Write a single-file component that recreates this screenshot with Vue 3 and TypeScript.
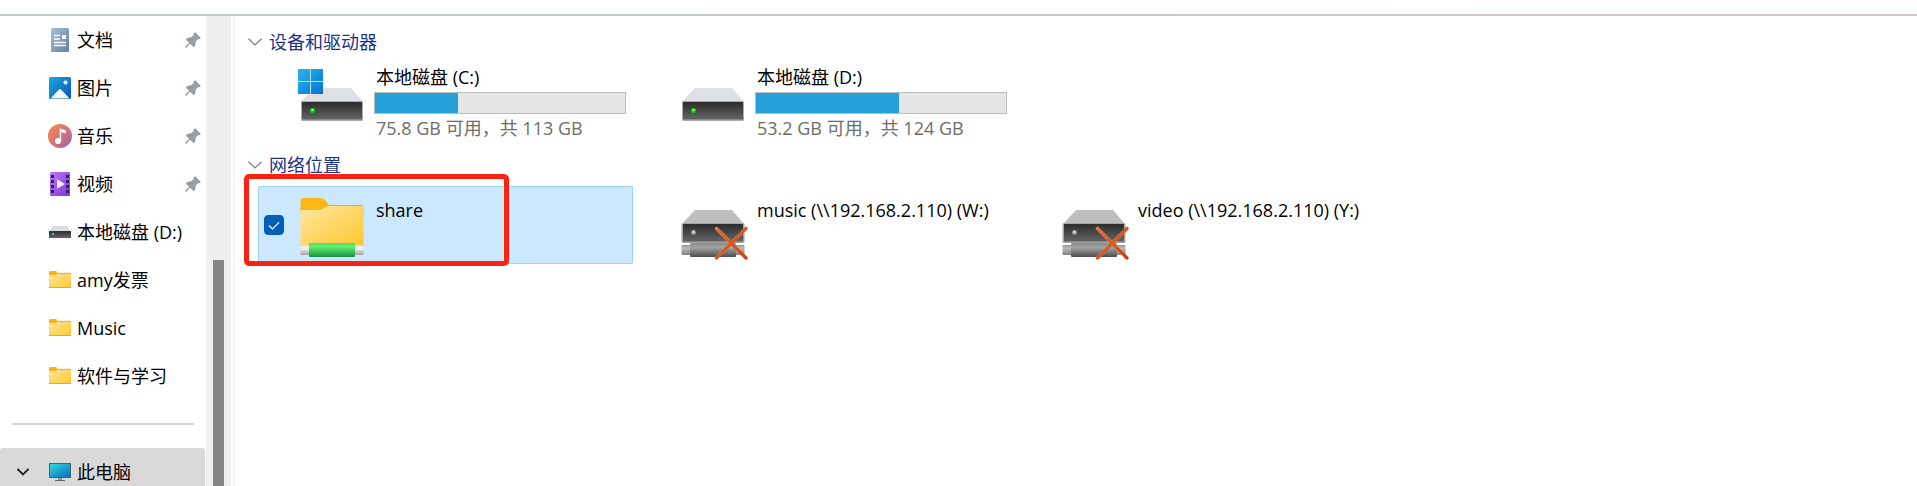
<script setup lang="ts">
import { ref } from 'vue'

type NavIcon = 'document' | 'picture' | 'music' | 'video' | 'drive' | 'folder'

interface NavItem {
  label: string
  icon: NavIcon
  pinned: boolean
}

interface Drive {
  name: string
  info: string
  used: number
  system: boolean
}

const navItems: NavItem[] = [
  { label: '文档', icon: 'document', pinned: true },
  { label: '图片', icon: 'picture', pinned: true },
  { label: '音乐', icon: 'music', pinned: true },
  { label: '视频', icon: 'video', pinned: true },
  { label: '本地磁盘 (D:)', icon: 'drive', pinned: false },
  { label: 'amy发票', icon: 'folder', pinned: false },
  { label: 'Music', icon: 'folder', pinned: false },
  { label: '软件与学习', icon: 'folder', pinned: false },
]

const drives: Drive[] = [
  { name: '本地磁盘 (C:)', info: '75.8 GB 可用，共 113 GB', used: 33, system: true },
  { name: '本地磁盘 (D:)', info: '53.2 GB 可用，共 124 GB', used: 57, system: false },
]

const offlineDrives: string[] = ['music (\\\\192.168.2.110) (W:)', 'video (\\\\192.168.2.110) (Y:)']

const shareSelected = ref(true)
</script>

<template>
  <div class="explorer">
    <svg class="defs" width="0" height="0" aria-hidden="true">
      <defs>
        <linearGradient id="g-doc" x1="0" y1="0" x2="1" y2="1"><stop offset="0" stop-color="#a9bfd6" /><stop offset="1" stop-color="#62809f" /></linearGradient>
        <linearGradient id="g-pic" x1="0" y1="0" x2="1" y2="1"><stop offset="0" stop-color="#1fa5e8" /><stop offset="1" stop-color="#0759ae" /></linearGradient>
        <linearGradient id="g-music" x1="0" y1="0" x2="1" y2="1"><stop offset="0.1" stop-color="#f08a4f" /><stop offset="0.55" stop-color="#d3727c" /><stop offset="1" stop-color="#8f62bd" /></linearGradient>
        <linearGradient id="g-video" x1="0" y1="0" x2="1" y2="1"><stop offset="0" stop-color="#b97cf5" /><stop offset="1" stop-color="#7a35dc" /></linearGradient>
        <linearGradient id="g-folder" x1="0" y1="0" x2="1" y2="1"><stop offset="0" stop-color="#ffe8a2" /><stop offset="1" stop-color="#ffc62f" /></linearGradient>
        <linearGradient id="g-body" x1="0" y1="0" x2="0" y2="1"><stop offset="0" stop-color="#2c2c2c" /><stop offset="1" stop-color="#646464" /></linearGradient>
        <linearGradient id="g-win" x1="0" y1="0" x2="1" y2="1"><stop offset="0" stop-color="#2fb4ee" /><stop offset="1" stop-color="#0074cf" /></linearGradient>
        <linearGradient id="g-green" x1="0" y1="0" x2="0" y2="1"><stop offset="0" stop-color="#55d765" /><stop offset="0.25" stop-color="#62f070" /><stop offset="1" stop-color="#198f45" /></linearGradient>
        <linearGradient id="g-cap" x1="0" y1="0" x2="0" y2="1"><stop offset="0" stop-color="#d8d8d8" /><stop offset="0.3" stop-color="#f7f7f7" /><stop offset="1" stop-color="#a0a0a0" /></linearGradient>
        <linearGradient id="g-tube" x1="0" y1="0" x2="0" y2="1"><stop offset="0" stop-color="#8a8a8a" /><stop offset="0.3" stop-color="#a5a5a5" /><stop offset="1" stop-color="#4d4d4d" /></linearGradient>
        <linearGradient id="g-end" x1="0" y1="0" x2="0" y2="1"><stop offset="0" stop-color="#939393" /><stop offset="0.3" stop-color="#bcbcbc" /><stop offset="1" stop-color="#808080" /></linearGradient>
        <linearGradient id="g-cross" x1="0" y1="0" x2="1" y2="1"><stop offset="0" stop-color="#ec6b2d" /><stop offset="1" stop-color="#d43c00" /></linearGradient>
        <linearGradient id="g-screen" x1="0" y1="0" x2="1" y2="1"><stop offset="0" stop-color="#35dcd8" /><stop offset="1" stop-color="#0868c4" /></linearGradient>
      </defs>
    </svg>

    <div class="top-line"></div>
    <div class="columns">
      <nav class="sidebar">
        <a v-for="item in navItems" :key="item.label" class="nav-item" href="#">
          <svg v-if="item.icon === 'document'" class="nav-icon" viewBox="0 0 24 24">
            <rect x="3" y="0" width="18" height="24" rx="1.5" fill="url(#g-doc)" />
            <path d="M6 7.5h6M6 11h6M6 14.500h12M6 17.500h12" stroke="#fff" stroke-width="1.4" />
            <rect x="14" y="7" width="4" height="4" fill="#fff" />
          </svg>
          <svg v-else-if="item.icon === 'picture'" class="nav-icon" viewBox="0 0 24 24">
            <rect x="1" y="1" width="22" height="22" rx="1.5" fill="url(#g-pic)" />
            <path d="M2.500 22.500L11 13.400Q12 12.400 13 13.400L21.500 22.500z" fill="#f2f8ff" />
            <circle cx="17.500" cy="6.500" r="2" fill="#fff" />
          </svg>
          <svg v-else-if="item.icon === 'music'" class="nav-icon" viewBox="0 0 24 24">
            <circle cx="12" cy="12" r="12" fill="url(#g-music)" />
            <circle cx="10" cy="17" r="3" fill="#fff" />
            <path d="M11.700 17V4.500L17.700 6.300V9.400L13.100 8V17z" fill="#fff" />
          </svg>
          <svg v-else-if="item.icon === 'video'" class="nav-icon" viewBox="0 0 24 24">
            <rect x="2" y="0" width="20" height="24" rx="1" fill="url(#g-video)" />
            <path d="M4.500 3v18M19.500 3v18" stroke="#3a1966" stroke-width="3" stroke-dasharray="3 2" />
            <path d="M9 7.200L17 12L9 16.800z" fill="#f4eefc" />
          </svg>
          <svg v-else-if="item.icon === 'drive'" class="nav-icon" viewBox="0 0 24 24">
            <path d="M1 11L5 6h14l4 5z" fill="#dcdde1" />
            <rect x="1" y="11" width="22" height="7" rx="0.500" fill="url(#g-body)" />
            <rect x="4" y="13" width="2" height="2" fill="#3be03b" />
          </svg>
          <svg v-else class="nav-icon" viewBox="0 0 24 24">
            <path d="M1 4.500Q1 3 2.500 3H8L10 5V8H1z" fill="#f9b218" />
            <path d="M1 7H8L10 5H23V20H1z" fill="url(#g-folder)" />
            <path d="M10 5.400H23M1 19.500H23" stroke="#e3a32a" stroke-width="0.900" />
          </svg>
          <span class="nav-label">{{ item.label }}</span>
          <svg v-if="item.pinned" class="pin" viewBox="0 0 16 16">
            <path d="M10.200 0.300C9 0.800 8.500 2 8.700 3.200L6.200 5.300C4.200 5.100 2 5.900 0.800 7.400L4.100 10.700L0 15L0.800 15.900L5.200 11.800L8.700 15.200C10.300 13.900 10.900 12 10.600 9.900L12.700 7.300C14 7.500 15.300 7 15.800 5.900z" fill="#95a0a6" />
          </svg>
        </a>
        <hr class="divider" />
        <a class="nav-item current" href="#">
          <svg class="expand" viewBox="0 0 14 10"><path d="M1.500 2L7 7.500L12.500 2" fill="none" stroke="#222" stroke-width="1.800" /></svg>
          <svg class="nav-icon" viewBox="0 0 24 24">
            <path d="M10 18h4v2.500h-4z" fill="#8b959b" />
            <path d="M7 20.500h10" stroke="#5c666c" />
            <rect x="1" y="3" width="22" height="15" rx="0.500" fill="#3f6573" />
            <rect x="2" y="4" width="20" height="13" fill="url(#g-screen)" />
          </svg>
          <span class="nav-label">此电脑</span>
        </a>
      </nav>

      <div class="track"><div class="thumb"></div></div>

      <main class="content">
        <section class="group">
          <button class="group-title" type="button">
            <svg class="chevron" viewBox="0 0 14 8"><path d="M0.500 0.800L7 7L13.500 0.800" fill="none" stroke="#7b7b7b" stroke-width="1.200" /></svg>
            <span>设备和驱动器</span>
          </button>
          <div class="tiles">
            <article v-for="drive in drives" :key="drive.name" class="tile">
              <svg class="tile-icon" viewBox="0 0 64 78">
                <path d="M1 39L14 25H51L63 39z" fill="#dfe0e5" />
                <rect x="1" y="38" width="62" height="20" rx="1.500" fill="#aaa" />
                <rect x="2" y="39" width="60" height="17.500" rx="0.500" fill="url(#g-body)" />
                <circle cx="12.500" cy="47.500" r="2.600" fill="#12c412" />
                <circle cx="12.500" cy="47" r="1.200" fill="#7dff7d" />
                <template v-if="drive.system">
                  <rect x="-2" y="6" width="25" height="25" fill="#b8e2fa" />
                  <path d="M-2 6h12v12h-12zM11 6h12v12h-12zM-2 19h12v12h-12zM11 19h12v12h-12z" fill="url(#g-win)" />
                </template>
              </svg>
              <div class="tile-text">
                <div class="tile-name">{{ drive.name }}</div>
                <div class="usage" role="meter" :aria-label="drive.name" :aria-valuenow="drive.used" aria-valuemin="0" aria-valuemax="100">
                  <div class="usage-fill" :style="{ width: drive.used + '%' }"></div>
                </div>
                <div class="tile-info">{{ drive.info }}</div>
              </div>
            </article>
          </div>
        </section>

        <section class="group">
          <button class="group-title" type="button">
            <svg class="chevron" viewBox="0 0 14 8"><path d="M0.500 0.800L7 7L13.500 0.800" fill="none" stroke="#7b7b7b" stroke-width="1.200" /></svg>
            <span>网络位置</span>
          </button>
          <div class="tiles">
            <article class="tile network" :class="{ selected: shareSelected }">
              <label class="check">
                <input v-model="shareSelected" type="checkbox" aria-label="share" />
                <svg v-if="shareSelected" viewBox="0 0 20 20"><path d="M5 10.500L8.500 14L15 7.300" fill="none" stroke="#fff" stroke-width="1.200" /></svg>
              </label>
              <svg class="tile-icon" viewBox="0 0 64 78">
                <path d="M0.500 15Q0.500 12 3.500 12H20Q23 12 25 14L29 19V26H0.500z" fill="#fbb917" />
                <path d="M28 19H61Q63.500 19 63.500 21.500V30H20z" fill="#e9ab25" />
                <path d="M0.500 26Q0.500 24 3 24H18Q21.500 24 24 22L26.500 20.500Q27.500 20 29 20H61Q63.500 20 63.500 22.500V59H0.500z" fill="url(#g-folder)" />
                <rect x="0.500" y="59" width="63" height="10" rx="1" fill="url(#g-cap)" />
                <rect x="9" y="57" width="46" height="14" rx="1" fill="url(#g-green)" />
              </svg>
              <div class="tile-text"><div class="tile-name">share</div></div>
              <div class="highlight"></div>
            </article>
            <article v-for="name in offlineDrives" :key="name" class="tile network">
              <svg class="tile-icon" viewBox="0 0 64 78">
                <path d="M1 38L14 24H51L63 38z" fill="#bebebe" />
                <rect x="0.500" y="37" width="63" height="20" rx="1.500" fill="#a5a5a5" />
                <rect x="2" y="38" width="60" height="17.500" rx="0.500" fill="url(#g-body)" />
                <circle cx="12.500" cy="46.500" r="2.400" fill="#999" />
                <circle cx="12.500" cy="46" r="1.200" fill="#ddd" />
                <rect x="0.500" y="59" width="63" height="10" rx="1" fill="url(#g-end)" />
                <rect x="9" y="57" width="46" height="14" rx="1" fill="url(#g-tube)" />
                <path d="M35.500 42.500L65 72M65 42.500L35.500 72" stroke="#b78b78" stroke-width="3.600" stroke-linecap="round" />
                <path d="M35.500 42.500L65 72M65 42.500L35.500 72" stroke="url(#g-cross)" stroke-width="2.600" stroke-linecap="round" />
              </svg>
              <div class="tile-text"><div class="tile-name">{{ name }}</div></div>
            </article>
          </div>
        </section>
      </main>
    </div>
  </div>
</template>

<style>
body {
  margin: 0;
  background: #fff;
}
</style>

<style scoped>
.explorer {
  box-sizing: border-box;
  display: flex;
  flex-direction: column;
  height: 100vh;
  padding-top: 14px;
  overflow: hidden;
  color: #000;
  font-family: 'Open Sans', 'Noto Sans CJK SC', sans-serif;
  font-size: 18px;
  line-height: 24px;
}
.defs {
  position: absolute;
}
.top-line {
  flex: none;
  height: 2px;
  background: linear-gradient(90deg, #c3c9cc 35%, #d6c5c6 80%);
}
.columns {
  display: flex;
  flex: 1;
  min-height: 0;
}
.sidebar {
  flex: none;
  width: 206px;
  overflow: hidden;
}
.nav-item {
  box-sizing: border-box;
  display: flex;
  align-items: center;
  height: 48px;
  margin-right: 1px;
  padding: 0 4px 0 48px;
  color: inherit;
  text-decoration: none;
}
.nav-icon {
  flex: none;
  width: 24px;
  height: 24px;
  margin-right: 5px;
}
.nav-label {
  flex: 1;
  white-space: nowrap;
}
.pin {
  width: 16px;
  height: 16px;
}
.divider {
  height: 2px;
  margin: 23px 12px;
  border: 0;
  background: #d4d4d4;
}
.current {
  padding-left: 16px;
  border-radius: 3px;
  background: #d9d9d9;
}
.expand {
  flex: none;
  width: 14px;
  height: 10px;
  margin-right: 18px;
}
.track {
  flex: none;
  box-sizing: border-box;
  display: flex;
  width: 25px;
  padding: 244px 7px 0;
  background: #efefef;
}
.thumb {
  flex: 1;
  background: #858585;
}
.content {
  flex: 1;
  min-width: 0;
  margin-left: 2px;
  padding-top: 5px;
  border-left: 2px solid #f6f6f6;
}
.group {
  margin-bottom: 3px;
}
.group-title {
  display: flex;
  align-items: center;
  gap: 7px;
  height: 42px;
  padding: 0 0 0 13px;
  border: 0;
  background: none;
  color: #1e3287;
  font: inherit;
}
.chevron {
  width: 14px;
  height: 8px;
}
.tiles {
  display: grid;
  grid-template-columns: repeat(auto-fill, 375px);
  gap: 6px;
  padding-left: 23px;
}
.tile {
  position: relative;
  box-sizing: border-box;
  display: flex;
  height: 78px;
  padding-left: 42px;
  border-radius: 2px;
}
.selected {
  background: #cce8ff;
  box-shadow: inset 0 0 0 1px #99d1ff;
}
.tile-icon {
  flex: none;
  width: 64px;
  height: 78px;
  margin-right: 10px;
  overflow: visible;
}
.tile-text {
  width: 252px;
  padding-top: 2px;
  white-space: nowrap;
}
.network .tile-text {
  padding-top: 12px;
}
.tile-name,
.tile-info {
  padding-left: 2px;
}
.tile-info {
  color: #6d6d6d;
}
.usage {
  box-sizing: border-box;
  height: 22px;
  margin: 3px 0 2px;
  border: 1px solid #bcbcbc;
  background: #e6e6e6;
}
.usage-fill {
  height: 100%;
  background: #26a0da;
}
.check {
  position: absolute;
  top: 29px;
  left: 6px;
  display: grid;
  width: 20px;
  height: 20px;
}
.check input {
  grid-area: 1 / 1;
  width: 20px;
  height: 20px;
  margin: 0;
  border: 1px solid #005fb8;
  border-radius: 4px;
  appearance: none;
  background: #fff;
}
.check input:checked {
  background: #005fb8;
}
.check svg {
  grid-area: 1 / 1;
  width: 20px;
  height: 20px;
  pointer-events: none;
}
.highlight {
  position: absolute;
  top: -12px;
  left: -14px;
  box-sizing: border-box;
  width: 265px;
  height: 92px;
  border: 5px solid #ff2112;
  border-radius: 5px;
  pointer-events: none;
}
</style>
